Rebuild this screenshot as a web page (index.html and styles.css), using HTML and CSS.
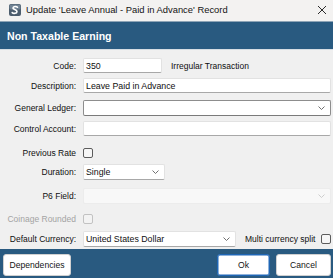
FILE: index.html
```html
<!DOCTYPE html>
<html>
<head>
<meta charset="utf-8">
<link rel="stylesheet" href="styles.css">
</head>
<body>
<div class="window">
  <div class="titlebar">
    <svg class="appicon" width="12" height="12" viewBox="0 0 12 12">
      <rect x="0" y="0" width="12" height="12" rx="2" fill="#4c5d6d"/>
      <rect x="0.5" y="0.5" width="11" height="5" rx="1.5" fill="#6f8294"/>
      <path d="M8.5 3.2 C7.5 2.2 4.2 2.2 4 4 C3.8 5.6 8.2 5.4 8 7.6 C7.8 9.6 4.4 9.8 3.2 8.6" fill="none" stroke="#ffffff" stroke-width="1.6" stroke-linecap="round"/>
    </svg>
    <span class="title">Update 'Leave Annual - Paid in Advance' Record</span>
    <svg class="close" width="10" height="10" viewBox="0 0 10 10">
      <path d="M1 1 L9 9 M9 1 L1 9" stroke="#2b2b2b" stroke-width="1"/>
    </svg>
  </div>
  <div class="header">Non Taxable Earning</div>
  <div class="form">
    <div class="row r-code">
      <span class="label">Code:</span>
      <div class="field w-code">350</div>
      <span class="aside">Irregular Transaction</span>
    </div>
    <div class="row r-desc">
      <span class="label">Description:</span>
      <div class="field grow">Leave Paid in Advance</div>
    </div>
    <div class="row r-gl">
      <span class="label">General Ledger:</span>
      <div class="field select grow active">
        <span></span>
        <svg class="chev" width="7" height="4" viewBox="0 0 7 4"><polyline points="0.5,0.5 3.5,3.5 6.5,0.5" fill="none" stroke="#606060" stroke-width="0.9"/></svg>
      </div>
    </div>
    <div class="row r-ctrl">
      <span class="label">Control Account:</span>
      <div class="field grow"></div>
    </div>
    <div class="row r-prev">
      <span class="label">Previous Rate</span>
      <span class="check"></span>
    </div>
    <div class="row r-dur">
      <span class="label">Duration:</span>
      <div class="field select w-dur">
        <span>Single</span>
        <svg class="chev" width="7" height="4" viewBox="0 0 7 4"><polyline points="0.5,0.5 3.5,3.5 6.5,0.5" fill="none" stroke="#606060" stroke-width="0.9"/></svg>
      </div>
    </div>
    <div class="row r-p6">
      <span class="label">P6 Field:</span>
      <div class="field select grow disabled">
        <span></span>
        <svg class="chev" width="7" height="4" viewBox="0 0 7 4"><polyline points="0.5,0.5 3.5,3.5 6.5,0.5" fill="none" stroke="#c8c8c8" stroke-width="0.9"/></svg>
      </div>
    </div>
    <div class="row r-coin">
      <span class="label muted">Coinage Rounded</span>
      <span class="check off"></span>
    </div>
    <div class="row r-cur">
      <span class="label">Default Currency:</span>
      <div class="field select w-cur">
        <span>United States Dollar</span>
        <svg class="chev" width="7" height="4" viewBox="0 0 7 4"><polyline points="0.5,0.5 3.5,3.5 6.5,0.5" fill="none" stroke="#606060" stroke-width="0.9"/></svg>
      </div>
      <span class="aside">Multi currency split</span>
      <span class="check end"></span>
    </div>
  </div>
  <div class="footer">
    <button class="btn w-dep">Dependencies</button>
    <span class="spacer"></span>
    <button class="btn primary w-ok">Ok</button>
    <button class="btn w-cancel">Cancel</button>
  </div>
</div>
</body>
</html>
```
FILE: styles.css
```css
html, body {
  margin: 0;
  padding: 0;
}
body {
  width: 333px;
  height: 278px;
  overflow: hidden;
  font-family: "Liberation Sans", Arial, sans-serif;
  color: #0f0f0f;
  background: #f0f0f0;
}
.window {
  display: flex;
  flex-direction: column;
  height: 278px;
}
.titlebar {
  height: 21px;
  background: #f3f2f1;
  display: flex;
  align-items: center;
  padding-left: 9px;
  padding-right: 6px;
  box-sizing: border-box;
}
.appicon {
  flex: none;
  margin-top: -1px;
}
.title {
  font-size: 9.4px;
  margin-left: 5px;
  color: #141414;
  flex: 1;
  margin-top: -2px;
}
.close {
  flex: none;
  margin-top: -2px;
}
.header {
  background: #295a80;
  border-top: 1px solid #8ea4b6;
  border-bottom: 1px solid #d6dde3;
  color: #ffffff;
  font-weight: bold;
  font-size: 10.6px;
  display: flex;
  align-items: center;
  padding-left: 7px;
  box-sizing: border-box;
  height: 29px;
}
.form {
  flex: 1;
  display: flex;
  flex-direction: column;
  padding: 7px 2px 0 0;
}
.row {
  display: flex;
  align-items: center;
  font-size: 8.5px;
}
.label {
  width: 76px;
  flex: none;
  text-align: right;
  margin-right: 7px;
}
.label.muted {
  color: #a3a3a3;
}
.field {
  height: 15px;
  box-sizing: border-box;
  background: #ffffff;
  border: 1px solid #e2e2e2;
  border-bottom-color: #a8a8a8;
  border-radius: 2px;
  font-size: 8.8px;
  display: flex;
  align-items: center;
  padding-left: 2px;
  padding-right: 5px;
}
.field.grow {
  flex: 1;
}
.field.select {
  height: 16px;
  justify-content: space-between;
}
.field.active {
  border-color: #8d8d8d;
  border-bottom-color: #7a7a7a;
}
.field.disabled {
  background: #f8f8f8;
  border-color: #ececec;
}
.w-code { width: 79px; }
.w-dur { width: 82px; }
.w-cur { width: 153px; }
.aside {
  margin-left: 9px;
}
.check {
  width: 10px;
  height: 10px;
  box-sizing: border-box;
  border: 1px solid #5c5c5c;
  border-radius: 2px;
  background: #f6f6f6;
}
.check.off {
  border-color: #c2c2c2;
  background: #f3f3f3;
}
.check.end {
  margin-left: auto;
  margin-right: 0;
}
.r-code { margin-top: 1px; }
.r-desc { margin-top: 5px; }
.r-gl { margin-top: 7px; }
.r-ctrl { margin-top: 5px; }
.r-prev { margin-top: 12px; }
.r-dur { margin-top: 6px; }
.r-p6 { margin-top: 8px; }
.r-coin { margin-top: 10px; }
.r-cur { margin-top: 7px; }
.footer {
  height: 29px;
  background: #295a80;
  display: flex;
  align-items: flex-start;
  padding: 5px 2px 0 3px;
  box-sizing: border-box;
  gap: 6px;
}
.spacer {
  flex: 1;
}
.btn {
  height: 22px;
  background: #ffffff;
  border: 1px solid #d0d0d0;
  border-radius: 3px;
  font-family: "Liberation Sans", Arial, sans-serif;
  font-size: 8.6px;
  color: #141414;
  padding: 0;
  margin: 0;
}
.btn.primary {
  border-color: #1f66b5;
  box-shadow: inset 0 0 0 0.5px #1f66b5;
}
.w-dep { width: 68px; }
.w-ok { width: 53px; }
.w-cancel { width: 55px; }
```
